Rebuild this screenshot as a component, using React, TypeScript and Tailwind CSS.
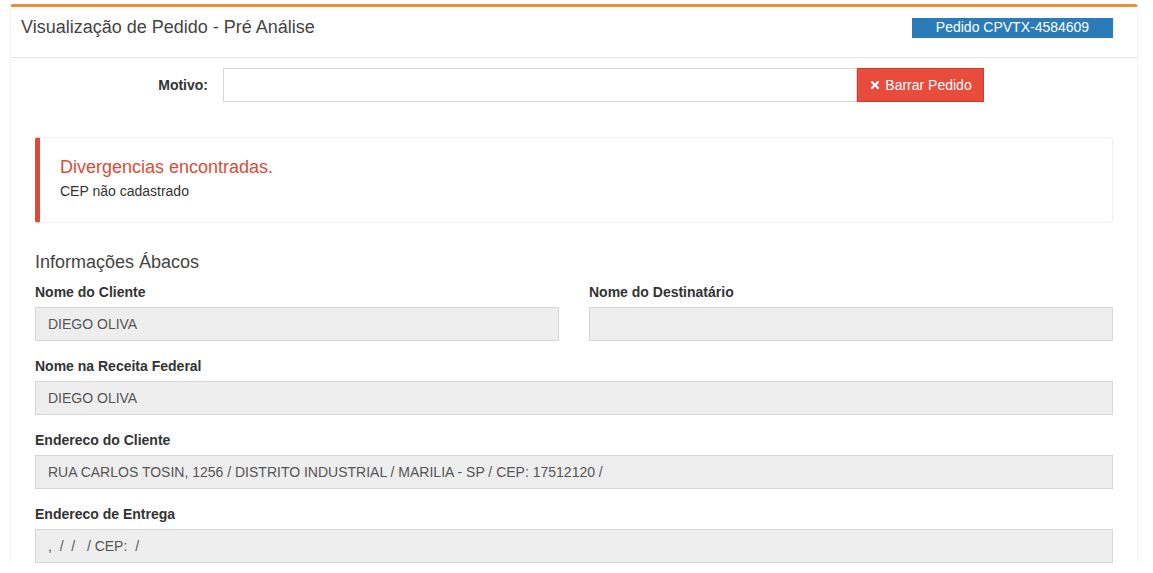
import { FaTimes } from "react-icons/fa";

function Field({ label, value }: { label: string; value?: string }) {
  return (
    <div className="mb-[15px]">
      <div className="mb-[5px] text-[14px] leading-[20px] font-bold text-[#333]">{label}</div>
      <div className="flex h-[34px] items-center border border-[#d6d6d6] bg-[#eeeeee] px-[12px] text-[14px] text-[#555] whitespace-pre">
        {value}
      </div>
    </div>
  );
}

export default function App() {
  return (
    <main className="min-h-screen bg-white pt-[4px] font-['Liberation_Sans',Arial,sans-serif]">
      <div className="ml-[10px] w-[1128px] rounded-t-[3px] border-x border-t-[3px] border-x-[#f2f2f2] border-t-[#e8913c] bg-white">
        <div className="flex h-[51px] items-center justify-between border-b border-[#e4e4e4] pb-[9px] pl-[10px] pr-[24px]">
          <h1 className="text-[18px] text-[#444]">Visualização de Pedido - Pré Análise</h1>
          <span className="flex h-[20px] w-[201px] items-center justify-center bg-[#2b7bb9] text-[14px] text-white">
            Pedido CPVTX-4584609
          </span>
        </div>

        <div className="px-[24px] pt-[10px]">
          <div className="flex items-center">
            <label className="w-[173px] text-right text-[14px] font-bold text-[#333]">Motivo:</label>
            <input className="ml-[15px] h-[34px] w-[634px] border border-[#d6d6d6] px-[12px] text-[14px] outline-none" />
            <button className="flex h-[34px] w-[127px] items-center justify-center gap-[4px] border border-[#d73925] bg-[#e74c3c] text-[14px] text-white">
              <FaTimes className="h-[12px] w-[12px]" />
              Barrar Pedido
            </button>
          </div>

          <div className="mt-[35px] flex h-[86px] flex-col justify-center rounded-[3px] border border-[#eeeeee] border-l-[5px] border-l-[#dd4b39] pb-[3px] pl-[20px]">
            <div className="text-[18px] leading-[22px] text-[#dd4b39]">Divergencias encontradas.</div>
            <div className="mt-[3px] text-[14px] leading-[20px] text-[#333]">CEP não cadastrado</div>
          </div>

          <h2 className="mt-[28px] text-[18px] leading-[22px] text-[#444]">Informações Ábacos</h2>

          <div className="mt-[9px] grid grid-cols-2 gap-x-[30px]">
            <Field label="Nome do Cliente" value="DIEGO OLIVA" />
            <Field label="Nome do Destinatário" value="" />
          </div>
          <Field label="Nome na Receita Federal" value="DIEGO OLIVA" />
          <Field
            label="Endereco do Cliente"
            value="RUA CARLOS TOSIN, 1256 / DISTRITO INDUSTRIAL / MARILIA - SP / CEP: 17512120 /"
          />
          <Field label="Endereco de Entrega" value=",  /  /   / CEP:  /" />
        </div>
      </div>
    </main>
  );
}
